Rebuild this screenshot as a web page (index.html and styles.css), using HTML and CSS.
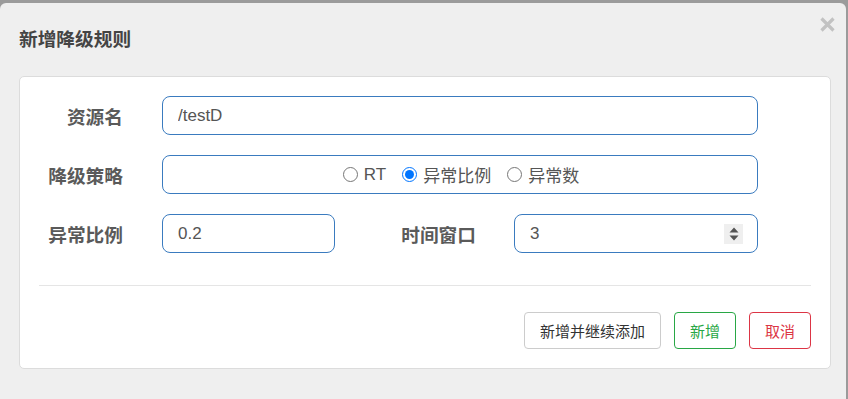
FILE: index.html
```html
<!DOCTYPE html>
<html lang="zh">
<head>
<meta charset="utf-8">
<title>新增降级规则</title>
<link rel="stylesheet" href="styles.css">
</head>
<body>
<div class="modal">
  <div class="modal-header">
    <h3 class="modal-title">新增降级规则</h3>
    <span class="close-btn" aria-label="close">
      <svg width="15" height="15" viewBox="0 0 15 15"><path d="M1.5 1.5 L13.5 13.5 M13.5 1.5 L1.5 13.5" stroke="#c2c2c2" stroke-width="3.2" stroke-linecap="butt"/></svg>
    </span>
  </div>
  <div class="card">
    <div class="form-row">
      <label class="lbl">资源名</label>
      <div class="field full"><input class="txt" type="text" value="/testD"></div>
    </div>
    <div class="form-row">
      <label class="lbl">降级策略</label>
      <div class="field full radios">
        <label class="radio"><input type="radio" name="grade">RT</label>
        <label class="radio"><input type="radio" name="grade" checked>异常比例</label>
        <label class="radio"><input type="radio" name="grade">异常数</label>
      </div>
    </div>
    <div class="form-row">
      <label class="lbl">异常比例</label>
      <div class="field short"><input class="txt" type="text" value="0.2"></div>
      <label class="lbl lbl2">时间窗口</label>
      <div class="field medium">
        <input class="txt" type="text" value="3">
        <span class="spinner">
          <svg width="10" height="14" viewBox="0 0 10 14"><path d="M5 0.5 L9.5 5.5 L0.5 5.5 Z M5 13.5 L9.5 8.5 L0.5 8.5 Z" fill="#555"/></svg>
        </span>
      </div>
    </div>
    <div class="divider"></div>
    <div class="actions">
      <button class="btn btn-default">新增并继续添加</button>
      <button class="btn btn-success">新增</button>
      <button class="btn btn-danger">取消</button>
    </div>
  </div>
</div>
</body>
</html>
```
FILE: styles.css
```css
html, body {
  margin: 0;
  padding: 0;
}
body {
  background: #9b9b9b;
  width: 848px;
  height: 399px;
  overflow: hidden;
  font-family: "Liberation Sans", "Noto Sans CJK SC", sans-serif;
}
.modal {
  margin-top: 3px;
  width: 846px;
  height: 400px;
  background: #efefef;
  border-radius: 6px 6px 0 0;
  box-sizing: border-box;
  padding: 0 16px 0 19px;
}
.modal-header {
  height: 73px;
  display: flex;
  align-items: flex-start;
  justify-content: space-between;
  box-sizing: border-box;
  padding-top: 22px;
}
.modal-title {
  margin: 0;
  font-size: 18.7px;
  line-height: 26px;
  font-weight: bold;
  color: #444;
  font-family: "Noto Sans CJK SC", sans-serif;
}
.close-btn {
  display: block;
  margin-top: -8px;
  margin-right: -5px;
  line-height: 0;
}
.card {
  width: 812px;
  box-sizing: border-box;
  background: #fff;
  border: 1px solid #dcdcdc;
  border-radius: 5px;
  padding: 19px 19px 19px 19px;
}
.form-row {
  display: flex;
  align-items: center;
  height: 39px;
  margin-bottom: 20px;
}
.form-row:nth-child(3) {
  margin-bottom: 0;
}
.lbl {
  width: 84px;
  margin-right: 39px;
  text-align: right;
  font-family: "Noto Sans CJK SC", sans-serif;
  font-size: 18.7px;
  font-weight: bold;
  color: #5a5a5a;
  line-height: 24px;
  flex: none;
}
.lbl2 {
  width: 141px;
  margin-right: 38px;
}
.field {
  height: 39px;
  box-sizing: border-box;
  border: 1px solid #3a7bbf;
  border-radius: 8px;
  display: flex;
  align-items: center;
  flex: none;
  background: #fff;
}
.full { width: 596px; }
.short { width: 173px; }
.medium { width: 244px; padding-right: 14px; }
.txt {
  border: 0;
  outline: none;
  background: transparent;
  padding: 0 0 0 15px;
  font-family: "Liberation Sans", "Noto Sans CJK SC", sans-serif;
  font-size: 17px;
  color: #555;
  flex: 1;
  min-width: 0;
  height: 30px;
}
.spinner {
  width: 19px;
  height: 20px;
  background: #efefef;
  display: flex;
  align-items: center;
  justify-content: center;
  flex: none;
}
.radios {
  justify-content: center;
  padding-left: 2px;
}
.radio {
  display: inline-flex;
  align-items: center;
  font-size: 17px;
  color: #555;
  font-family: "Liberation Sans", "Noto Sans CJK SC", sans-serif;
  margin-right: 16px;
}
.radio:last-child {
  margin-right: 0;
}
.radio input {
  margin: 0 6px 0 0;
  width: 15px;
  height: 15px;
}
.divider {
  height: 1px;
  background: #e5e5e5;
  margin-top: 32px;
}
.actions {
  display: flex;
  justify-content: flex-end;
  gap: 13px;
  margin-top: 26px;
}
.btn {
  height: 37px;
  padding: 0 15px;
  font-size: 15px;
  font-family: "Noto Sans CJK SC", sans-serif;
  background: #fff;
  border-radius: 4px;
  border: 1px solid #ccc;
  color: #333;
  cursor: pointer;
}
.btn-success {
  border-color: #28a745;
  color: #28a745;
}
.btn-danger {
  border-color: #dc3545;
  color: #dc3545;
}
```
